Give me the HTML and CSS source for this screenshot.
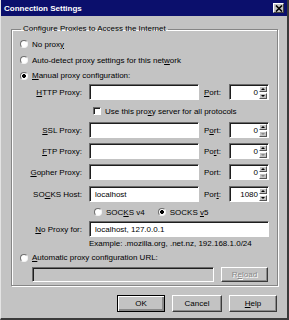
FILE: index.html
```html
<!DOCTYPE html>
<html lang="en">
<head>
    <meta charset="UTF-8">
    <title>Connection Settings</title>
    <link rel="stylesheet" href="styles.css">
</head>
<body>

<div class="window">
    <div class="titlebar">
        <span class="title">Connection Settings</span>
        <span class="close-btn">
            <svg width="8" height="7" viewBox="0 0 8 7"><path d="M1 0.5 L7 6.5 M7 0.5 L1 6.5" stroke="#000" stroke-width="1.6"/></svg>
        </span>
    </div>

    <div class="content">
        <fieldset class="group">
            <legend>Configure Proxies to Access the Internet</legend>

            <div class="radio-row"><span class="radio"></span><span>No prox<u>y</u></span></div>
            <div class="radio-row"><span class="radio"></span><span>Auto-detect proxy settings for this net<u>w</u>ork</span></div>
            <div class="radio-row short"><span class="radio checked"></span><span><u>M</u>anual proxy configuration:</span></div>

            <div class="prow http">
                <label class="lbl"><u>H</u>TTP Proxy:</label>
                <span class="field"></span>
                <label class="port-lbl"><u>P</u>ort:</label>
                <span class="port"><span class="port-val">0</span><span class="spin"><b class="up"></b><b class="dn"></b></span></span>
            </div>

            <div class="prow check-row">
                <span class="checkbox"></span><span>Use this pro<u>x</u>y server for all protocols</span>
            </div>

            <div class="prow ssl">
                <label class="lbl"><u>S</u>SL Proxy:</label>
                <span class="field"></span>
                <label class="port-lbl">P<u>o</u>rt:</label>
                <span class="port"><span class="port-val">0</span><span class="spin"><b class="up"></b><b class="dn off"></b></span></span>
            </div>

            <div class="prow">
                <label class="lbl"><u>F</u>TP Proxy:</label>
                <span class="field"></span>
                <label class="port-lbl">Po<u>r</u>t:</label>
                <span class="port"><span class="port-val">0</span><span class="spin"><b class="up"></b><b class="dn off"></b></span></span>
            </div>

            <div class="prow">
                <label class="lbl"><u>G</u>opher Proxy:</label>
                <span class="field"></span>
                <label class="port-lbl">Port:</label>
                <span class="port"><span class="port-val">0</span><span class="spin"><b class="up"></b><b class="dn off"></b></span></span>
            </div>

            <div class="prow socks">
                <label class="lbl">SO<u>C</u>KS Host:</label>
                <span class="field">localhost</span>
                <label class="port-lbl">Por<u>t</u>:</label>
                <span class="port"><span class="port-val">1080</span><span class="spin"><b class="up"></b><b class="dn"></b></span></span>
            </div>

            <div class="prow socks-row">
                <span class="socks-opt"><span class="radio"></span><span>SOC<u>K</u>S v4</span></span>
                <span class="socks-opt"><span class="radio checked"></span><span>SOCKS <u>v</u>5</span></span>
            </div>

            <div class="prow noproxy">
                <label class="lbl"><u>N</u>o Proxy for:</label>
                <span class="field wide">localhost, 127.0.0.1</span>
            </div>

            <div class="example">Example: .mozilla.org, .net.nz, 192.168.1.0/24</div>

            <div class="radio-row auto"><span class="radio"></span><span><u>A</u>utomatic proxy configuration URL:</span></div>
            <div class="url-row">
                <span class="field disabled"></span>
                <span class="btn small disabled-btn"><span>R<u>e</u>load</span></span>
            </div>
        </fieldset>

        <div class="buttons">
            <span class="btn default">OK</span>
            <span class="btn">Cancel</span>
            <span class="btn"><span><u>H</u>elp</span></span>
        </div>
    </div>
</div>

</body>
</html>
```

FILE: styles.css
```css
body {
    margin: 0;
    font-family: "Liberation Sans", Arial, sans-serif;
    font-size: 8px;
    color: #000;
    background: #c3c3c3;
}

u {
    text-decoration: underline;
    text-underline-offset: 1px;
}

.window {
    width: 289px;
    height: 320px;
    box-sizing: border-box;
    background: #c3c3c3;
    border-left: 1px solid #e4e4e4;
    border-right: 2px solid #3a3a3a;
    border-bottom: 2px solid #3a3a3a;
}

.titlebar {
    height: 16px;
    background: #0b0f6c;
    display: flex;
    align-items: center;
    justify-content: space-between;
    padding: 0 3px 0 3px;
}

.title {
    color: #fff;
    font-weight: bold;
    font-size: 8px;
}

.close-btn {
    width: 11px;
    height: 10px;
    box-sizing: border-box;
    background: #c3c3c3;
    border: 1px solid;
    border-color: #fff #404040 #404040 #fff;
    display: flex;
    align-items: center;
    justify-content: center;
}

.content {
    padding: 0 9px 0 10px;
}

.group {
    margin: 8px 0 0 0;
    padding: 2px 8px 3px 8px;
    border: 1px solid #868686;
    box-shadow: 1px 1px 0 #fff, inset 1px 1px 0 #fff;
}

.group legend {
    padding: 0 2px;
    margin-left: 1px;
    line-height: 10px;
}

/* radio buttons */

.radio-row {
    height: 16px;
    display: flex;
    align-items: center;
}

.radio-row.short {
    height: 15px;
}

.radio {
    width: 8px;
    height: 8px;
    border-radius: 50%;
    box-sizing: border-box;
    border: 1px solid;
    border-color: #6e6e6e #f4f4f4 #f4f4f4 #6e6e6e;
    background: #fff;
    margin-right: 4px;
    flex: none;
}

.radio.checked {
    background: radial-gradient(circle, #000 1.6px, #fff 2.2px);
}

/* proxy rows */

.prow {
    height: 16px;
    display: flex;
    align-items: center;
    margin-top: 5px;
}

.prow.http {
    margin-top: 1px;
}

.prow.check-row {
    margin-top: 3px;
    padding-left: 73px;
}

.prow.ssl {
    margin-top: 3px;
}

.prow.socks {
    margin-top: 6px;
}

.prow.socks-row {
    margin-top: 2px;
    padding-left: 74px;
    gap: 13px;
}

.prow.noproxy {
    margin-top: 1px;
}

.lbl {
    width: 62px;
    text-align: right;
    margin-right: 7px;
    flex: none;
}

.port-lbl {
    width: 25px;
    flex: none;
}

.field {
    width: 110px;
    height: 16px;
    box-sizing: border-box;
    background: #fff;
    border: 1px solid;
    border-color: #6a6a6a #fff #fff #6a6a6a;
    box-shadow: inset 1px 1px 0 #1e1e1e;
    padding: 0 0 0 5px;
    display: flex;
    align-items: center;
    margin-right: 5px;
    flex: none;
}

.field.wide {
    width: 180px;
    margin-right: 0;
}

.field.disabled {
    background: #c3c3c3;
    width: 182px;
    height: 15px;
    margin-right: 0;
}

.port {
    width: 40px;
    height: 16px;
    box-sizing: border-box;
    background: #fff;
    border: 1px solid;
    border-color: #6a6a6a #fff #fff #6a6a6a;
    box-shadow: inset 1px 1px 0 #1e1e1e;
    display: flex;
    justify-content: flex-end;
    align-items: center;
    padding: 1px 1px 0 0;
    flex: none;
}

.port-val {
    margin-right: 1px;
}

.spin {
    width: 8px;
    height: 13px;
    display: flex;
    flex-direction: column;
    gap: 1px;
}

.spin b {
    flex: 1;
    background: #c3c3c3;
    border: 1px solid;
    border-color: #fff #555 #555 #fff;
    position: relative;
}

.spin b::after {
    content: "";
    position: absolute;
    left: 1px;
    top: 1px;
    border-left: 2px solid transparent;
    border-right: 2px solid transparent;
}

.spin .up::after {
    border-bottom: 2px solid #000;
}

.spin .dn::after {
    border-top: 2px solid #000;
}

.spin .dn.off::after {
    border-top-color: #8a8a8a;
}

.checkbox {
    width: 8px;
    height: 8px;
    box-sizing: border-box;
    background: #fff;
    border: 1px solid;
    border-color: #6a6a6a #fff #fff #6a6a6a;
    box-shadow: inset 1px 1px 0 #222;
    margin-right: 4px;
}

.socks-opt {
    display: flex;
    align-items: center;
}

.example {
    height: 11px;
    line-height: 11px;
    margin-top: 1px;
    padding-left: 69px;
}

.radio-row.auto {
    height: 15px;
    margin-top: 1px;
}

.url-row {
    display: flex;
    align-items: center;
    padding-left: 12px;
    gap: 7px;
    margin-top: 2px;
}

/* buttons */

.btn {
    height: 17px;
    box-sizing: border-box;
    border: 1px solid;
    border-color: #fff #3a3a3a #3a3a3a #fff;
    box-shadow: inset -1px -1px 0 #8a8a8a;
    display: flex;
    align-items: center;
    justify-content: center;
    width: 48px;
}

.btn.small {
    height: 15px;
    width: 47px;
}

.disabled-btn {
    color: #8a8a8a;
    text-shadow: 1px 1px 0 #fff;
}

.btn.default {
    border: 1px solid #000;
    box-shadow: inset 1px 1px 0 #fff, inset -2px -2px 0 #8a8a8a;
}

.buttons {
    display: flex;
    justify-content: flex-end;
    gap: 7px;
    margin-top: 9px;
    padding-right: 1px;
}

.buttons .btn:nth-child(2) {
    width: 50px;
}
```
